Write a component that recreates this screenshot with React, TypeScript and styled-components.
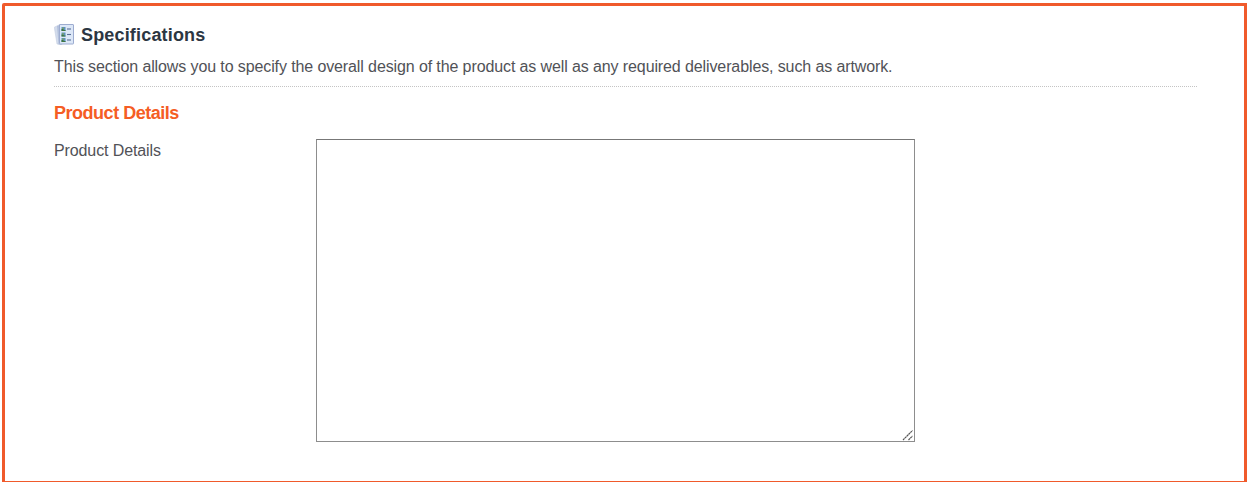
import React from "react";
import styled, { createGlobalStyle } from "styled-components";

const GlobalStyle = createGlobalStyle`
  *, *::before, *::after { box-sizing: border-box; }
  body {
    margin: 0;
    background: #fff;
    color: #515257;
    font-family: "Liberation Sans", Arial, Helvetica, sans-serif;
    font-size: 16px;
    letter-spacing: -0.11px;
  }
`;

const Panel = styled.section`
  width: 1245px;
  height: 479px;
  margin: 3px 0 0 2px;
  padding: 17px 47px 0 49px;
  border: 3px solid #f05a2b;
  border-bottom-width: 1px;
  border-top-left-radius: 2px;
`;

const Header = styled.header`
  height: 64px;
  border-bottom: 1px dotted #c4c4c4;
`;

const Title = styled.h2`
  display: flex;
  align-items: center;
  gap: 7px;
  height: 24px;
  margin: 0;
  color: #2c3642;
  font-size: 18px;
  letter-spacing: 0.17px;
  line-height: 24px;
  font-weight: 700;
`;

const Description = styled.p`
  margin: 10px 0 0;
  line-height: 20px;
  white-space: nowrap;
`;

const Subtitle = styled.h3`
  margin: 16px 0 0;
  color: #f55d24;
  font-size: 18px;
  letter-spacing: -0.48px;
  line-height: 20px;
`;

const Field = styled.div`
  display: grid;
  grid-template-columns: 262px 599px;
  align-items: start;
  margin-top: 16px;
`;

const Label = styled.label`
  padding-top: 2px;
  line-height: 20px;
`;

const InputFrame = styled.div`
  display: flex;
  align-items: flex-end;
  justify-content: flex-end;
  position: relative;
  width: 599px;
  height: 303px;
`;

const TextArea = styled.textarea`
  width: 100%;
  height: 100%;
  margin: 0;
  padding: 4px;
  border: 1px solid #8d8d8d;
  border-top-color: #777;
  border-radius: 0;
  outline: 0;
  background: #fff;
  resize: none;
  font: inherit;
`;

const Grip = styled.svg`
  position: absolute;
  right: 1px;
  bottom: 1px;
`;

const SheetsIcon = () => (
  <svg width="20" height="22" viewBox="0 0 20 22" aria-hidden="true">
    <path d="M0.3 3.2 6 .5 8 20.5 3 20Z" fill="#d3dcec" stroke="#c3cde0" strokeWidth=".6" />
    <path d="M3 2 7 .5v20H4.5Z" fill="#b3c1dc" />
    <rect x="5.5" y=".5" width="14" height="19.5" rx=".5" fill="#dce7f7" stroke="#9dacd0" />
    {[3, 8.5, 14].map((y) => (
      <g key={y}>
        <rect x="7.5" y={y} width="4" height="4" fill="#5b92bd" />
        <path d={`M7.5 ${y + 2}h1.5l1 1h1.5v1h-4Z`} fill="#3f7540" />
        <rect x="8.3" y={y + 0.6} width="1.4" height="1.4" fill="#87a64e" />
        <path d={`M13 ${y + 2}h4`} stroke="#586f9a" strokeWidth="1.1" />
      </g>
    ))}
  </svg>
);

export default function App() {
  return (
    <>
      <GlobalStyle />
      <Panel>
        <Header>
          <Title>
            <SheetsIcon />
            <span>Specifications</span>
          </Title>
          <Description>
            This section allows you to specify the overall design of the product as well as any required deliverables, such as artwork.
          </Description>
        </Header>
        <Subtitle>Product Details</Subtitle>
        <Field>
          <Label htmlFor="details">Product Details</Label>
          <InputFrame>
            <TextArea id="details" />
            <Grip width="12" height="12" viewBox="0 0 12 12" aria-hidden="true">
              <path d="M1 11 10.5 1.5M6.5 11 10.5 7" stroke="#555" strokeWidth="1.2" strokeDasharray="2.2 .4" />
            </Grip>
          </InputFrame>
        </Field>
      </Panel>
    </>
  );
}
